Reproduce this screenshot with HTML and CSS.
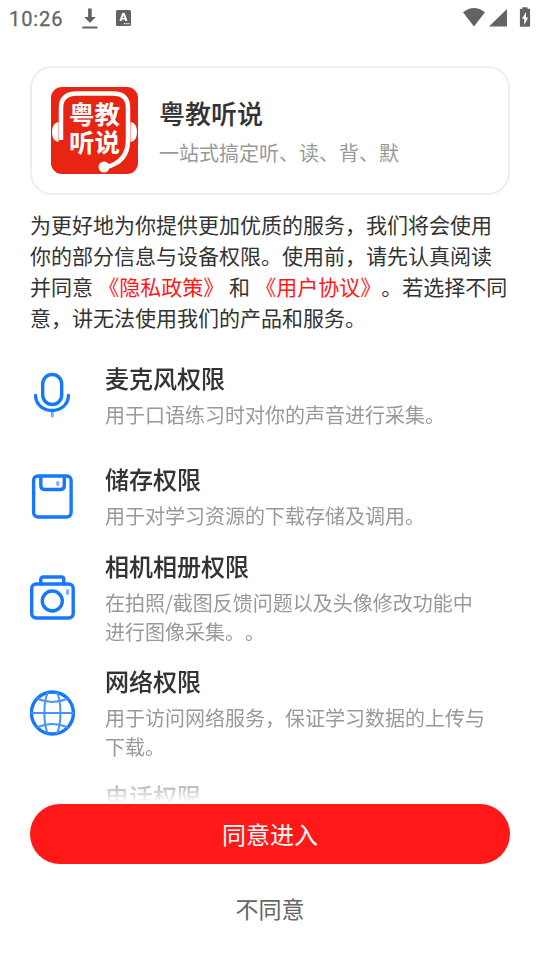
FILE: index.html
```html
<!DOCTYPE html>
<html lang="zh-CN">
<head>
<meta charset="utf-8">
<title>粤教听说</title>
<link rel="stylesheet" href="styles.css">
</head>
<body>
<header class="status">
  <span class="clock">10:26</span>
  <svg class="download" width="16" height="22" viewBox="0 0 16 22"><path d="M6.100 .5h3.600v8.500h4L8 15 2.200 9h3.900zM.3 18.600h15.200v2H.3z"/></svg>
  <svg class="keyboard" width="15" height="16" viewBox="0 0 15 16"><rect width="15" height="16" rx="1.6"/><path class="cut" fill-rule="evenodd" d="M6.2 3h2.5l2.7 8H9.2l-.5-1.5H6L5.500 11H3.400zM6.600 8h1.700l-.8-2.500zM8 13h1.300v1.300H8zM10.200 13h1.300v1.300h-1.300zM12.400 13h1.200v1.300h-1.200z"/></svg>
  <svg class="signals" width="69" height="21" viewBox="0 0 69 21"><path d="M1 5.200Q12-3.300 23 5.200L12 19.500zM45 2v17.500H27zM60.500 1.700V.2h5v1.500h1.600q1 0 1 1v16q0 1-1 1h-8.200q-1 0-1-1v-16q0-1 1-1z"/><path class="cut" d="M64 5l-4 6.800h2.200V18l4-7.500H64z"/></svg>
</header>
<main class="page">
  <section class="app-card">
    <svg class="logo" width="88" height="88" viewBox="0 0 88 88">
      <rect width="87" height="87" rx="11" fill="#e82412"/>
      <g fill="none" stroke="#fff" stroke-width="4.500"><path d="M10 53V21Q10 6.500 26 6.500H62Q77 6.500 77 21V53Q77 75 55 80"/></g>
      <path fill="#fff" d="M7.500 35v20Q1 54 1 45T7.500 35zM79.500 35v20Q86 54 86 45T79.500 35z"/>
      <circle cx="53" cy="80" r="5.500" fill="#fff"/>
      <g class="logo-text"><text x="18" y="37">粤教</text><text x="18" y="64.500">听说</text></g>
    </svg>
    <div class="app-info">
      <h1>粤教听说</h1>
      <p>一站式搞定听、读、背、默</p>
    </div>
  </section>
  <p class="intro">为更好地为你提供更加优质的服务，我们将会使用<br>你的部分信息与设备权限。使用前，请先认真阅读<br>并同意 <a>《隐私政策》</a> 和 <a>《用户协议》</a>。若选择不同<br>意，讲无法使用我们的产品和服务。</p>
  <ul class="permissions">
    <li class="tall">
      <svg width="46" height="46" viewBox="0 0 46 46"><path class="soft" d="M22.300 40v4"/><rect x="12.700" y="2.500" width="19" height="30" rx="9.500"/><path d="M5.500 23.500C6.500 43.500 37.500 43.500 38.500 23.500"/></svg>
      <div><h2>麦克风权限</h2><p>用于口语练习时对你的声音进行采集。</p></div>
    </li>
    <li class="tall compact">
      <svg width="46" height="46" viewBox="0 0 46 46"><rect x="3.600" y="3" width="37.500" height="41" rx="4.500"/><path d="M10.800 3.500v9q0 4 4 4h15.500q4 0 4-4v-9"/><path class="soft" d="M27.700 9.500v2"/></svg>
      <div><h2>储存权限</h2><p>用于对学习资源的下载存储及调用。</p></div>
    </li>
    <li>
      <svg width="46" height="46" viewBox="0 0 46 46"><rect x="1.700" y="9" width="41.500" height="34" rx="4.500"/><path d="M10.800 9V4.500q0-2.500 2.500-2.500h18q2.500 0 2.500 2.500V9"/><circle cx="22.300" cy="26" r="10"/><path class="soft" d="M37.500 15.500v3"/></svg>
      <div><h2>相机相册权限</h2><p>在拍照/截图反馈问题以及头像修改功能中<br>进行图像采集。。</p></div>
    </li>
    <li>
      <svg width="46" height="46" viewBox="0 0 46 46"><circle cx="22.400" cy="23" r="21"/><g class="grid"><path d="M1.500 23h42M17.500 3C13.300 14 13.300 32 17.500 43M27.300 3C31.500 14 31.500 32 27.300 43M8 9Q22.400 15 36.800 9M8 37Q22.400 31 36.800 37"/></g></svg>
      <div><h2>网络权限</h2><p>用于访问网络服务，保证学习数据的上传与<br>下载。</p></div>
    </li>
    <li class="last">
      <div><h2>电话权限</h2></div>
    </li>
  </ul>
  <button class="agree">同意进入</button>
  <button class="decline">不同意</button>
</main>
</body>
</html>
```
FILE: styles.css
```css
* { box-sizing: border-box; margin: 0; padding: 0; }
body {
  width: 540px;
  height: 960px;
  overflow: hidden;
  background: #fff;
  color: #333;
  font-family: "Noto Sans CJK SC", sans-serif;
  text-spacing-trim: space-all;
}
.status {
  height: 37px;
  display: flex;
  align-items: flex-start;
  padding: 8px 9px 0;
  fill: #636363;
}
.clock {
  width: 73px;
  font: 400 20px/22px Roboto, sans-serif;
  letter-spacing: .9px;
  color: #666;
  -webkit-text-stroke: .3px #666;
}
.download { margin-right: 18px; }
.keyboard { margin-top: 2px; }
.cut { fill: #fff; }
.signals { margin-left: auto; margin-top: -1px; }
.page { padding: 29px 30px 0; }
.app-card {
  height: 129px;
  display: flex;
  align-items: flex-start;
  gap: 20px;
  padding: 19px;
  border: 2px solid #eee;
  border-radius: 22px;
}
.logo { flex: none; }
.logo-text {
  font-size: 25.5px;
  font-weight: 700;
  fill: #fff;
}
h1, h2 { font-weight: 500; -webkit-text-stroke: .1px #333; }
h1 { font-size: 26px; line-height: 38px; margin-top: 7px; }
.app-info p { font-size: 20px; line-height: 30px; margin-top: 6px; color: #999; }
.intro { margin-top: 14px; font-size: 21px; line-height: 31px; white-space: nowrap; }
.intro a { margin-left: .5px; color: #ff1818; }
.permissions {
  height: 444px;
  margin-top: 27px;
  overflow: hidden;
  list-style: none;
  -webkit-mask-image: linear-gradient(#000 calc(100% - 40px), rgb(0 0 0 / .35) calc(100% - 19px), transparent calc(100% - 1px));
  mask-image: linear-gradient(#000 calc(100% - 40px), rgb(0 0 0 / .35) calc(100% - 19px), transparent calc(100% - 1px));
}
.permissions li {
  height: 115px;
  display: flex;
  align-items: center;
  gap: 29px;
  padding-bottom: 18px;
}
.permissions li.tall { height: 101px; align-items: flex-start; }
.permissions li.tall svg { margin-top: 12px; }
.permissions li.compact { height: 87px; padding: 0; }
.permissions li.last { padding-left: 75px; align-items: flex-start; }
.permissions svg {
  flex: none;
  margin-top: 2px;
  fill: none;
  stroke: #1677ff;
  stroke-width: 3.400;
  stroke-linecap: round;
}
.permissions .soft { stroke: #78b1ff; stroke-width: 3; }
.permissions .grid { stroke: #4593ff; stroke-width: 2; }
h2 { font-size: 24px; line-height: 35px; }
.permissions p { font-size: 20px; line-height: 29px; margin-top: 5px; color: #999; white-space: nowrap; }
button { display: block; width: 100%; border: 0; font-family: inherit; }
.agree { height: 60px; padding-bottom: 2px; border-radius: 30px; background: #ff1818; color: #fff; font-size: 24px; }
.decline { margin-top: 24px; height: 40px; background: none; color: #666; font-size: 23px; }
```
